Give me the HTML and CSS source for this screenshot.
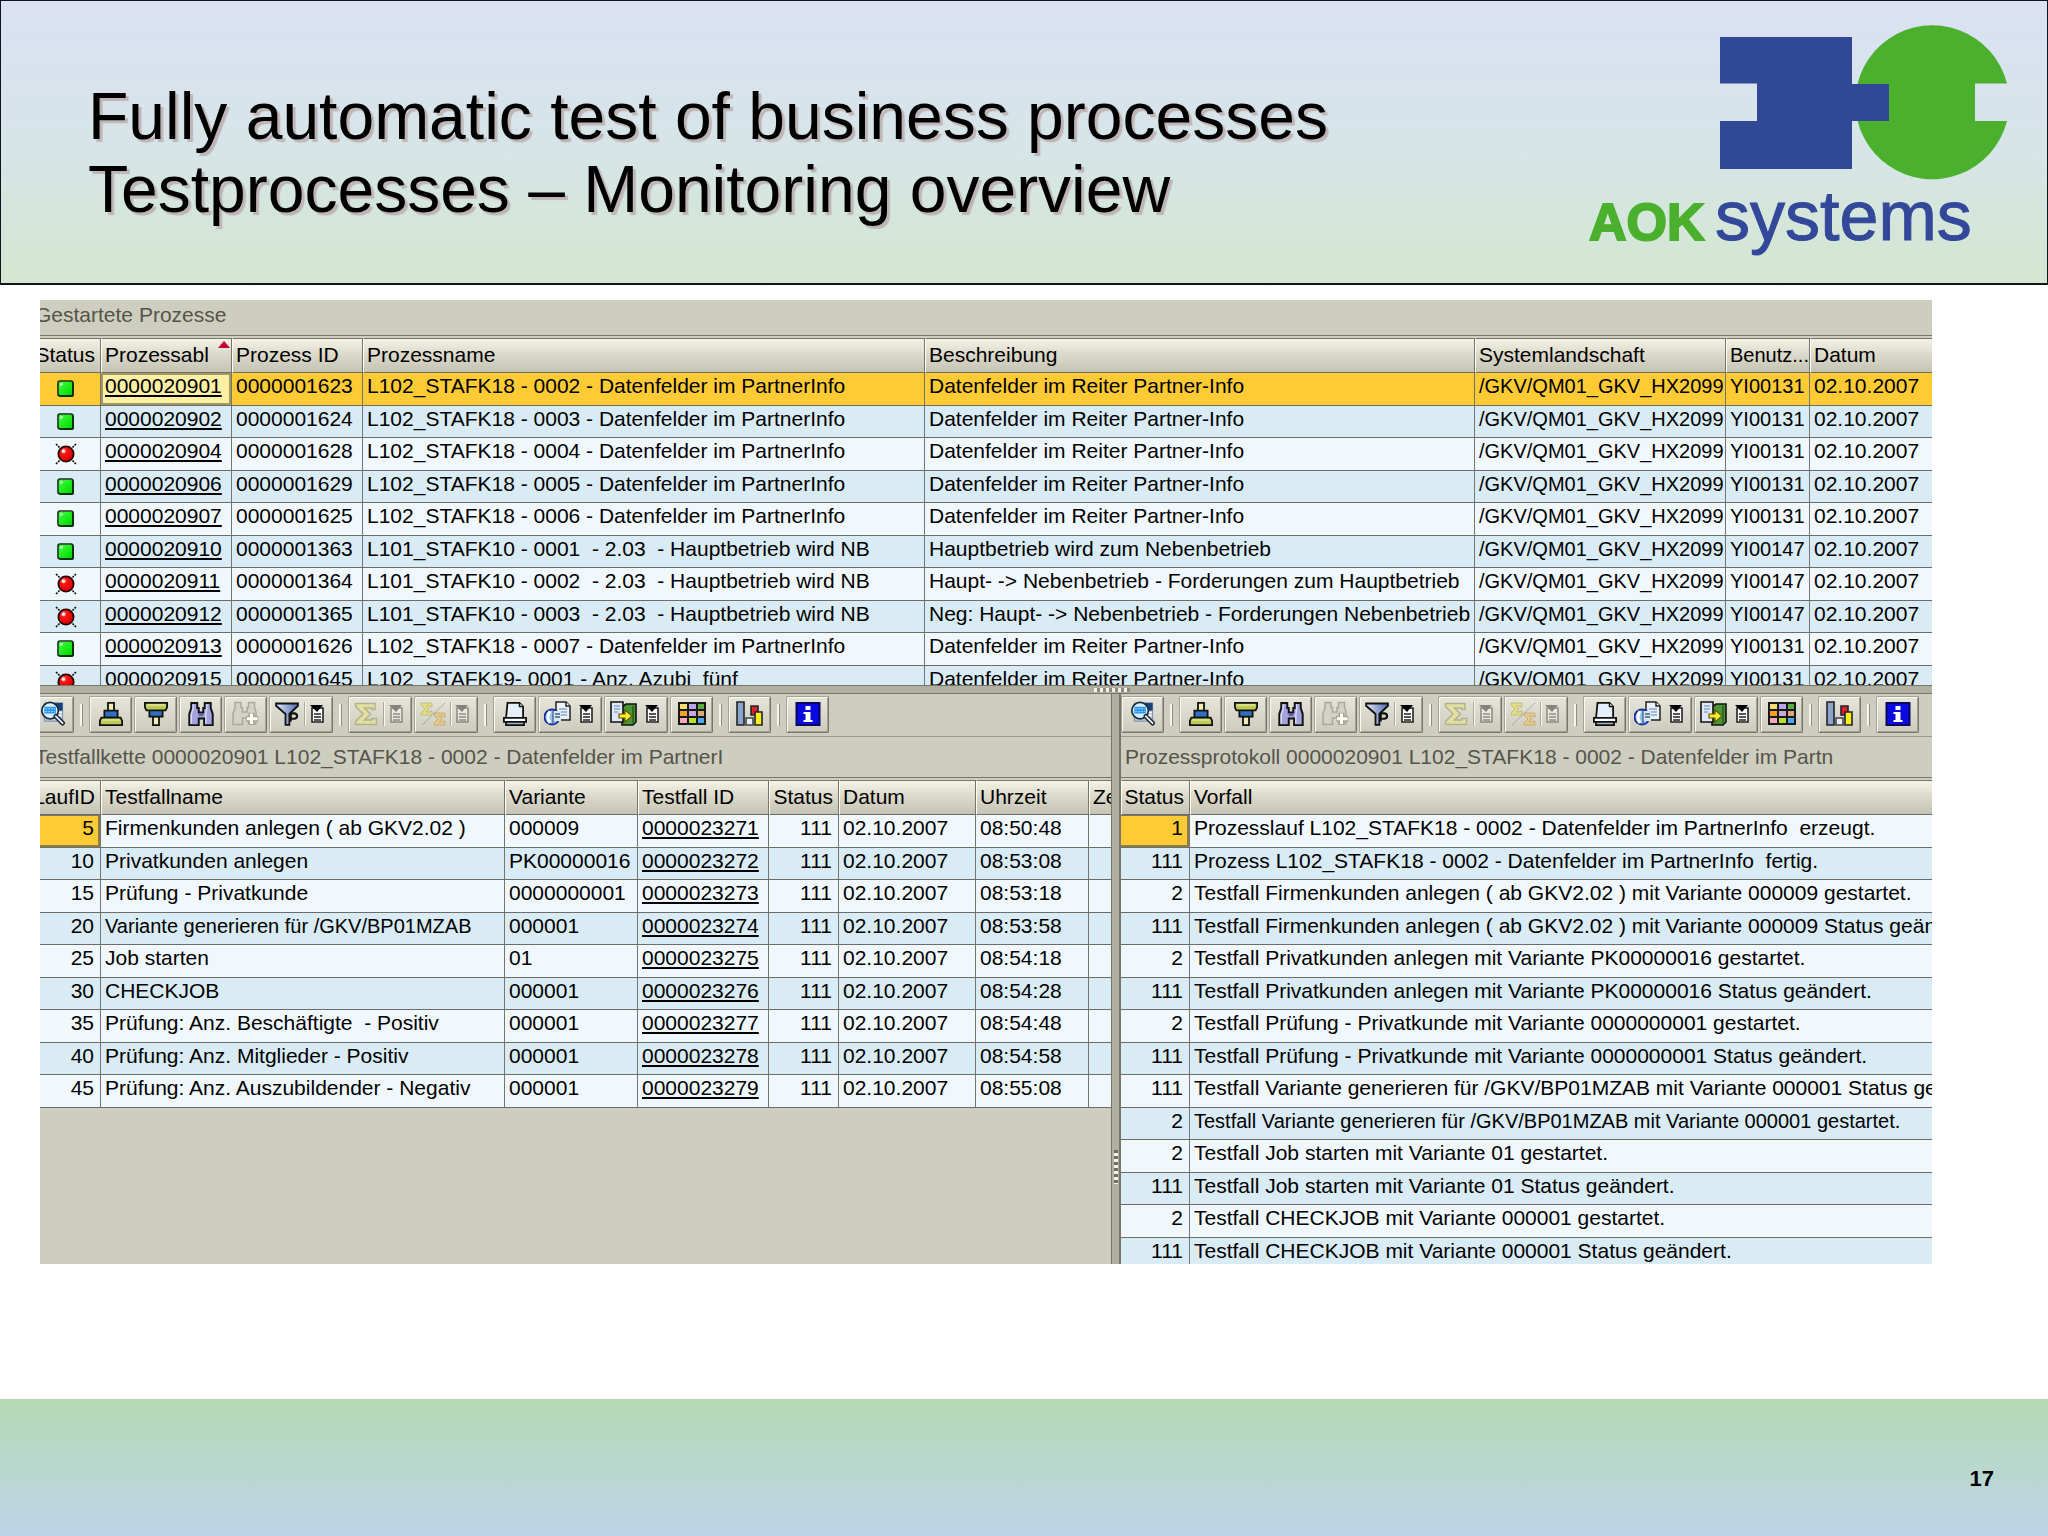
FILE: index.html
```html
<!DOCTYPE html>
<html lang="en">
<head>
<meta charset="utf-8">
<title>Testprocesses – Monitoring overview</title>
<link rel="stylesheet" href="styles.css">
</head>
<body>
<svg class="sprite" aria-hidden="true">
  <defs>
    <linearGradient id="g-funnel" x1="0" x2="1" y1="0" y2="0"><stop offset="0" stop-color="#dfe8fa"/><stop offset="1" stop-color="#4f6db0"/></linearGradient>
    <linearGradient id="g-green" x1="0" x2="1" y1="0" y2="1"><stop offset="0" stop-color="#3cff3c"/><stop offset="1" stop-color="#00d800"/></linearGradient>
    <radialGradient id="g-red" cx=".35" cy=".3" r=".7"><stop offset="0" stop-color="#ffb0b0"/><stop offset=".3" stop-color="#ff1414"/><stop offset="1" stop-color="#d80000"/></radialGradient>
  </defs>
  <symbol id="i-ok" viewBox="0 0 18 18">
    <rect x="2" y="2" width="15" height="15" rx="2" fill="#0b3a0b"/>
    <rect x="2" y="2" width="13" height="13" rx="1" fill="url(#g-green)"/>
    <rect x="1" y="1" width="15" height="15" rx="2" fill="none" stroke="#0a300a" stroke-width="1.6"/>
    <path d="M4 6V4h2" fill="none" stroke="#d8ffd8" stroke-width="1.4"/>
  </symbol>
  <symbol id="i-error" viewBox="0 0 22 22">
    <path d="M1 1l4 4M21 1l-4 4M1 21l4-4M21 21l-4-4" stroke="#111" stroke-width="1.6" stroke-dasharray="2 1"/>
    <circle cx="11" cy="11" r="7.6" fill="url(#g-red)" stroke="#2a0000" stroke-width="1.8"/>
    <circle cx="8.4" cy="8.2" r="1.6" fill="#fff"/>
  </symbol>
  <symbol id="i-find" viewBox="0 0 27 26">
    <path d="M5 2h19v19H5z" fill="#b9c7d8" stroke="#7890ac"/>
    <path d="M16 2h8v8h-8z" fill="#14427c"/>
    <path d="M19 12h4M19 15h4" stroke="#fff" stroke-width="1.5"/>
    <circle cx="11" cy="10" r="8.6" fill="#d6f0ff" stroke="#1c2c3c" stroke-width="1.8"/>
    <path d="M5 6h12v7H5z" fill="#2f97ee"/>
    <path d="M6 8h10M6 11h10" stroke="#8fd0ff" stroke-dasharray="2 1"/>
    <path d="M17 16l7 7" stroke="#1c2430" stroke-width="5" stroke-linecap="round"/>
    <path d="M17 16l7 7" stroke="#e8eef4" stroke-width="2" stroke-linecap="round"/>
  </symbol>
  <symbol id="i-asc" viewBox="0 0 16 16">
    <g stroke="#111" stroke-width="1.2">
      <path d="M6 .6h4v5.400H6z" fill="#f2edb6"/>
      <path d="M3.600 5.800h8.800v4.600H3.600z" fill="#2f6fc0"/>
      <path d="M1.600 10.400h12.800l1 2v3H.6v-3z" fill="#bccb52"/>
    </g>
    <path d="M2.500 12h11" stroke="#dfe79a"/>
  </symbol>
  <symbol id="i-desc" viewBox="0 0 16 16">
    <g stroke="#111" stroke-width="1.2">
      <path d="M6 9.600h4v5.800H6z" fill="#f2edb6"/>
      <path d="M3.600 5.400h8.800v4.400H3.600z" fill="#2f6fc0"/>
      <path d="M.6.600h14.800v3l-1 2H1.600l-1-2z" fill="#bccb52"/>
    </g>
    <path d="M2 2h12" stroke="#dfe79a"/>
  </symbol>
  <symbol id="i-bino" viewBox="0 0 17 16">
    <path d="M2 .6h4v3.400h1v3h3V4h1V.6h4V4l1.300 4v7.400h-5.700V11H7v4.400H.7V8L2 4z" fill="#a3a3dc" stroke="#111" stroke-width="1.300"/>
    <path d="M3.300 1.500v3L2 8.500v6M12.300 1.500v3L11.700 8.500v6" stroke="#d6d6f6" fill="none"/>
    <path d="M7 8.500h3" stroke="#5a5aa8" stroke-width="1.500"/>
  </symbol>
  <symbol id="i-bino-next" viewBox="0 0 18 16">
    <path d="M2 .6h4v3.400h1v3h3V4h1V.6h4V4l1 3v8h-5v-4H7v4.400H.7V8L2 4z" fill="#d3d2c6" stroke="#aaa99d"/>
    <path d="M13 7.500v8M9.500 11.500h8" stroke="#a5a498" stroke-width="4"/>
    <path d="M13 8v7M10 11.500h7" stroke="#fffff2" stroke-width="2"/>
  </symbol>
  <symbol id="i-filter" viewBox="0 0 16 16">
    <path d="M.7 1h14.600v1.500L9.600 8v7.200H7V8L.7 2.500z" fill="url(#g-funnel)" stroke="#111" stroke-width="1.200"/>
    <path d="M10.500 13V7.600h2.200q2 0 2 1.800t-2 1.800h-2" fill="none" stroke="#111" stroke-width="1.400"/>
  </symbol>
  <symbol id="i-menu" viewBox="0 0 14 18">
    <path d="M2 3h11v14H2z" fill="#fff" stroke="#222" stroke-width="1.600"/>
    <path d="M4 9h7M4 12h7M4 15h7" stroke="#222" stroke-width="1.300"/>
    <path d="M0 0h13L7 7z" fill="#000"/>
  </symbol>
  <symbol id="i-sum" viewBox="0 0 16 16">
    <path d="M1 1h13v4h-2V4H7l4 4-4 4h5v-1h3v4H1v-2l5-5-5-5z" fill="#e2dfa2" stroke="#b4b28c"/>
  </symbol>
  <symbol id="i-subtotal" viewBox="0 0 26 24">
    <path d="M1 1h11v4h-2V4H6l3 3-3 3h4V9h2v4H1v-2l4-4-4-4z" fill="#e2df7c" stroke="#c0bd8a"/>
    <path d="M14 11h11v4h-2v-1h-4l3 3-3 3h4v-1h2v4H14v-2l4-4-4-4z" fill="#e8c98c" stroke="#c8ac78"/>
    <path d="M25 1L2 23" stroke="#98978a" stroke-dasharray="2 1"/>
  </symbol>
  <symbol id="i-print" viewBox="0 0 16 16">
    <path d="M3 .6h8l2.400 2.400v8H2z" fill="#e6f0fb" stroke="#111" stroke-width="1.200"/>
    <path d="M11 .6V3h2.400" fill="#fff" stroke="#111"/>
    <path d="M.6 10.600h14.800v2.600H.6z" fill="#fff" stroke="#111" stroke-width="1.200"/>
    <path d="M2 13.200h12v2.200H2z" fill="#9fb2cc" stroke="#111" stroke-width="1.200"/>
  </symbol>
  <symbol id="i-view" viewBox="0 0 27 25">
    <path d="M12 1h10l4 4v14H12z" fill="#e9f2fd" stroke="#222" stroke-width="1.500"/>
    <path d="M22 1v4h4" fill="#fff" stroke="#222" stroke-width="1.500"/>
    <path d="M15 8h8M15 11h8M15 14h8" stroke="#8aa6cc" stroke-width="1.500"/>
    <circle cx="8" cy="16" r="7.500" fill="#8fc4f4" stroke="#1830a0" stroke-width="1.800"/>
    <path d="M6 10q-4 6 0 12" fill="none" stroke="#fff" stroke-width="3"/>
    <path d="M9 10h8v10H9z" fill="#d8e6f6"/>
    <path d="M9 10v12M11 13h5M11 16h5" stroke="#44607c" stroke-width="1.300"/>
  </symbol>
  <symbol id="i-export" viewBox="0 0 27 25">
    <path d="M12 6l4-3h10v18l-3 3H12z" fill="#4a9636" stroke="#111" stroke-width="1.600"/>
    <path d="M23 5v17" stroke="#2c6a1e" stroke-width="2"/>
    <path d="M1 1h12v20H1z" fill="#dfe8f8" stroke="#111" stroke-width="1.600"/>
    <path d="M4 5h6M4 8h6M4 11h4" stroke="#8ba4cc" stroke-width="1.500"/>
    <path d="M9 13h6V9l7 6-7 6v-4H9z" fill="#ffee30" stroke="#665800" stroke-width="1.200"/>
  </symbol>
  <symbol id="i-layout" viewBox="0 0 28 23">
    <path d="M0 0h28v23H0z" fill="#181818"/>
    <path d="M2 2h7v5H2z" fill="#f8e070"/><path d="M11 2h7v5h-7z" fill="#b8a8e8"/><path d="M20 2h6v5h-6z" fill="#58b040"/>
    <path d="M2 9h7v5H2z" fill="#f8a020"/><path d="M11 9h7v5h-7z" fill="#c8a8d8"/><path d="M20 9h6v5h-6z" fill="#d8a878"/>
    <path d="M2 16h7v5H2z" fill="#f8a8b8"/><path d="M11 16h7v5h-7z" fill="#b8e030"/><path d="M20 16h6v5h-6z" fill="#48a8f8"/>
  </symbol>
  <symbol id="i-chart" viewBox="0 0 27 25">
    <path d="M1 1h7v23H1z" fill="#8aa4cc" stroke="#222" stroke-width="1.600"/>
    <path d="M15 5h7v9h-7z" fill="#e02030" stroke="#222" stroke-width="1.600"/>
    <path d="M10 17h7v7h-7z" fill="#e8eefc" stroke="#444" stroke-width="1.600"/>
    <path d="M19 11h7v13h-7z" fill="#f8ee20" stroke="#222" stroke-width="1.600"/>
  </symbol>
  <symbol id="i-info" viewBox="0 0 25 24">
    <path d="M1 1h23v22H1z" fill="#0a0ae0" stroke="#08085c" stroke-width="2"/>
    <path d="M10 4h5v4h-5zM8 10h7v8h2v2H8v-2h2v-6H8z" fill="#fff"/>
  </symbol>
</svg>

<header class="banner">
  <h1 class="banner-title">Fully automatic test of business processes<br>Testprocesses – Monitoring overview</h1>
  <svg class="logo" viewBox="0 0 424 232" role="img" aria-label="AOK systems">
    <path d="M388 59.500h32A77 77 0 1 0 420 97H388z" fill="#4ab02d"/>
    <path d="M133 13h132v47h37v37h-37v48H133V97h37V59.500h-37z" fill="#314896"/>
    <text class="logo-aok" x="2" y="216">AOK</text>
    <text class="logo-systems" x="128" y="216">systems</text>
  </svg>
</header>

<main class="monitor">
  <section class="pane pane-top scrolled">
    <div class="scrolled-body">
      <h2 class="caption caption-short">Gestartete Prozesse</h2>
      <table class="grid">
        <colgroup><col class="w70"><col class="w131"><col class="w131"><col class="w562"><col class="w550"><col class="w251"><col class="w84"><col></colgroup>
        <thead><tr><th class="num">Status</th><th class="sorted">Prozessabl<svg class="sort-mark" viewBox="0 0 12 7"><path d="M0 7h12L6 0z" fill="#c00030"/></svg></th><th>Prozess ID</th><th>Prozessname</th><th>Beschreibung</th><th>Systemlandschaft</th><th class="tight">Benutz...</th><th>Datum</th></tr></thead>
        <tbody>
          <tr class="selected"><td class="state"><svg class="ok"><use href="#i-ok"/></svg></td><td class="focus"><a href="#">0000020901</a></td><td>0000001623</td><td>L102_STAFK18 - 0002 - Datenfelder im PartnerInfo</td><td>Datenfelder im Reiter Partner-Info</td><td class="tight">/GKV/QM01_GKV_HX2099</td><td class="tight">YI00131</td><td>02.10.2007</td></tr>
          <tr><td class="state"><svg class="ok"><use href="#i-ok"/></svg></td><td><a href="#">0000020902</a></td><td>0000001624</td><td>L102_STAFK18 - 0003 - Datenfelder im PartnerInfo</td><td>Datenfelder im Reiter Partner-Info</td><td class="tight">/GKV/QM01_GKV_HX2099</td><td class="tight">YI00131</td><td>02.10.2007</td></tr>
          <tr><td class="state"><svg class="error"><use href="#i-error"/></svg></td><td><a href="#">0000020904</a></td><td>0000001628</td><td>L102_STAFK18 - 0004 - Datenfelder im PartnerInfo</td><td>Datenfelder im Reiter Partner-Info</td><td class="tight">/GKV/QM01_GKV_HX2099</td><td class="tight">YI00131</td><td>02.10.2007</td></tr>
          <tr><td class="state"><svg class="ok"><use href="#i-ok"/></svg></td><td><a href="#">0000020906</a></td><td>0000001629</td><td>L102_STAFK18 - 0005 - Datenfelder im PartnerInfo</td><td>Datenfelder im Reiter Partner-Info</td><td class="tight">/GKV/QM01_GKV_HX2099</td><td class="tight">YI00131</td><td>02.10.2007</td></tr>
          <tr><td class="state"><svg class="ok"><use href="#i-ok"/></svg></td><td><a href="#">0000020907</a></td><td>0000001625</td><td>L102_STAFK18 - 0006 - Datenfelder im PartnerInfo</td><td>Datenfelder im Reiter Partner-Info</td><td class="tight">/GKV/QM01_GKV_HX2099</td><td class="tight">YI00131</td><td>02.10.2007</td></tr>
          <tr><td class="state"><svg class="ok"><use href="#i-ok"/></svg></td><td><a href="#">0000020910</a></td><td>0000001363</td><td>L101_STAFK10 - 0001  - 2.03  - Hauptbetrieb wird NB</td><td>Hauptbetrieb wird zum Nebenbetrieb</td><td class="tight">/GKV/QM01_GKV_HX2099</td><td class="tight">YI00147</td><td>02.10.2007</td></tr>
          <tr><td class="state"><svg class="error"><use href="#i-error"/></svg></td><td><a href="#">0000020911</a></td><td>0000001364</td><td>L101_STAFK10 - 0002  - 2.03  - Hauptbetrieb wird NB</td><td>Haupt- -&gt; Nebenbetrieb - Forderungen zum Hauptbetrieb</td><td class="tight">/GKV/QM01_GKV_HX2099</td><td class="tight">YI00147</td><td>02.10.2007</td></tr>
          <tr><td class="state"><svg class="error"><use href="#i-error"/></svg></td><td><a href="#">0000020912</a></td><td>0000001365</td><td>L101_STAFK10 - 0003  - 2.03  - Hauptbetrieb wird NB</td><td>Neg: Haupt- -&gt; Nebenbetrieb - Forderungen Nebenbetrieb</td><td class="tight">/GKV/QM01_GKV_HX2099</td><td class="tight">YI00147</td><td>02.10.2007</td></tr>
          <tr><td class="state"><svg class="ok"><use href="#i-ok"/></svg></td><td><a href="#">0000020913</a></td><td>0000001626</td><td>L102_STAFK18 - 0007 - Datenfelder im PartnerInfo</td><td>Datenfelder im Reiter Partner-Info</td><td class="tight">/GKV/QM01_GKV_HX2099</td><td class="tight">YI00131</td><td>02.10.2007</td></tr>
          <tr><td class="state"><svg class="error"><use href="#i-error"/></svg></td><td><a href="#">0000020915</a></td><td>0000001645</td><td>L102_STAFK19- 0001 - Anz. Azubi_fünf</td><td>Datenfelder im Reiter Partner-Info</td><td class="tight">/GKV/QM01_GKV_HX2099</td><td class="tight">YI00131</td><td>02.10.2007</td></tr>
        </tbody>
      </table>
    </div>
  </section>

  <div class="splitter-h"><span class="grip-h"></span></div>

  <div class="lower">
    <section class="pane scrolled">
      <div class="scrolled-body">
        <div class="toolbar">
          <button class="tool" aria-label="Details"><svg class="i27"><use href="#i-find"/></svg></button>
          <span class="divider"></span>
          <button class="tool" aria-label="Sort ascending"><svg class="i24"><use href="#i-asc"/></svg></button>
          <button class="tool" aria-label="Sort descending"><svg class="i24"><use href="#i-desc"/></svg></button>
          <button class="tool" aria-label="Find"><svg class="i26"><use href="#i-bino"/></svg></button>
          <button class="tool" aria-label="Find next" disabled><svg class="i27"><use href="#i-bino-next"/></svg></button>
          <button class="tool wide" aria-label="Filter"><svg class="i24"><use href="#i-filter"/></svg><span class="rule"></span><svg class="menu"><use href="#i-menu"/></svg></button>
          <span class="divider"></span>
          <button class="tool wide" aria-label="Total" disabled><svg class="i24"><use href="#i-sum"/></svg><span class="rule"></span><svg class="menu"><use href="#i-menu"/></svg></button>
          <button class="tool wide" aria-label="Subtotals" disabled><svg class="i26"><use href="#i-subtotal"/></svg><span class="rule"></span><svg class="menu"><use href="#i-menu"/></svg></button>
          <span class="divider"></span>
          <button class="tool" aria-label="Print"><svg class="i24"><use href="#i-print"/></svg></button>
          <button class="tool wide" aria-label="Views"><svg class="i27"><use href="#i-view"/></svg><svg class="menu"><use href="#i-menu"/></svg></button>
          <button class="tool wide" aria-label="Export"><svg class="i27"><use href="#i-export"/></svg><svg class="menu"><use href="#i-menu"/></svg></button>
          <button class="tool" aria-label="Layout"><svg class="i28"><use href="#i-layout"/></svg></button>
          <span class="divider"></span>
          <button class="tool" aria-label="Graphic"><svg class="i27"><use href="#i-chart"/></svg></button>
          <span class="divider"></span>
          <button class="tool" aria-label="Information"><svg class="i26"><use href="#i-info"/></svg></button>
        </div>
        <h2 class="caption">Testfallkette 0000020901 L102_STAFK18 - 0002 - Datenfelder im PartnerI</h2>
        <table class="grid">
          <colgroup><col class="w70"><col class="w404"><col class="w133"><col class="w131"><col class="w70"><col class="w137"><col class="w113"><col></colgroup>
          <thead><tr><th class="num">LaufID</th><th>Testfallname</th><th>Variante</th><th>Testfall ID</th><th class="num">Status</th><th>Datum</th><th>Uhrzeit</th><th>Ze</th></tr></thead>
          <tbody>
            <tr><td class="num current">5</td><td>Firmenkunden anlegen ( ab GKV2.02 )</td><td>000009</td><td><a href="#">0000023271</a></td><td class="num">111</td><td>02.10.2007</td><td>08:50:48</td><td></td></tr>
            <tr><td class="num">10</td><td>Privatkunden anlegen</td><td>PK00000016</td><td><a href="#">0000023272</a></td><td class="num">111</td><td>02.10.2007</td><td>08:53:08</td><td></td></tr>
            <tr><td class="num">15</td><td>Prüfung - Privatkunde</td><td>0000000001</td><td><a href="#">0000023273</a></td><td class="num">111</td><td>02.10.2007</td><td>08:53:18</td><td></td></tr>
            <tr><td class="num">20</td><td class="tight">Variante generieren für /GKV/BP01MZAB</td><td>000001</td><td><a href="#">0000023274</a></td><td class="num">111</td><td>02.10.2007</td><td>08:53:58</td><td></td></tr>
            <tr><td class="num">25</td><td>Job starten</td><td>01</td><td><a href="#">0000023275</a></td><td class="num">111</td><td>02.10.2007</td><td>08:54:18</td><td></td></tr>
            <tr><td class="num">30</td><td>CHECKJOB</td><td>000001</td><td><a href="#">0000023276</a></td><td class="num">111</td><td>02.10.2007</td><td>08:54:28</td><td></td></tr>
            <tr><td class="num">35</td><td>Prüfung: Anz. Beschäftigte  - Positiv</td><td>000001</td><td><a href="#">0000023277</a></td><td class="num">111</td><td>02.10.2007</td><td>08:54:48</td><td></td></tr>
            <tr><td class="num">40</td><td>Prüfung: Anz. Mitglieder - Positiv</td><td>000001</td><td><a href="#">0000023278</a></td><td class="num">111</td><td>02.10.2007</td><td>08:54:58</td><td></td></tr>
            <tr><td class="num">45</td><td>Prüfung: Anz. Auszubildender - Negativ</td><td>000001</td><td><a href="#">0000023279</a></td><td class="num">111</td><td>02.10.2007</td><td>08:55:08</td><td></td></tr>
          </tbody>
        </table>
      </div>
    </section>

    <div class="splitter-v"><span class="grip-v"></span></div>

    <section class="pane">
      <div class="toolbar">
        <button class="tool" aria-label="Details"><svg class="i27"><use href="#i-find"/></svg></button>
        <span class="divider"></span>
        <button class="tool" aria-label="Sort ascending"><svg class="i24"><use href="#i-asc"/></svg></button>
        <button class="tool" aria-label="Sort descending"><svg class="i24"><use href="#i-desc"/></svg></button>
        <button class="tool" aria-label="Find"><svg class="i26"><use href="#i-bino"/></svg></button>
        <button class="tool" aria-label="Find next" disabled><svg class="i27"><use href="#i-bino-next"/></svg></button>
        <button class="tool wide" aria-label="Filter"><svg class="i24"><use href="#i-filter"/></svg><span class="rule"></span><svg class="menu"><use href="#i-menu"/></svg></button>
        <span class="divider"></span>
        <button class="tool wide" aria-label="Total" disabled><svg class="i24"><use href="#i-sum"/></svg><span class="rule"></span><svg class="menu"><use href="#i-menu"/></svg></button>
        <button class="tool wide" aria-label="Subtotals" disabled><svg class="i26"><use href="#i-subtotal"/></svg><span class="rule"></span><svg class="menu"><use href="#i-menu"/></svg></button>
        <span class="divider"></span>
        <button class="tool" aria-label="Print"><svg class="i24"><use href="#i-print"/></svg></button>
        <button class="tool wide" aria-label="Views"><svg class="i27"><use href="#i-view"/></svg><svg class="menu"><use href="#i-menu"/></svg></button>
        <button class="tool wide" aria-label="Export"><svg class="i27"><use href="#i-export"/></svg><svg class="menu"><use href="#i-menu"/></svg></button>
        <button class="tool" aria-label="Layout"><svg class="i28"><use href="#i-layout"/></svg></button>
        <span class="divider"></span>
        <button class="tool" aria-label="Graphic"><svg class="i27"><use href="#i-chart"/></svg></button>
        <span class="divider"></span>
        <button class="tool" aria-label="Information"><svg class="i26"><use href="#i-info"/></svg></button>
      </div>
      <h2 class="caption">Prozessprotokoll 0000020901 L102_STAFK18 - 0002 - Datenfelder im Partn</h2>
      <table class="grid">
        <colgroup><col class="w69"><col></colgroup>
        <thead><tr><th class="num">Status</th><th>Vorfall</th></tr></thead>
        <tbody>
          <tr><td class="num current">1</td><td>Prozesslauf L102_STAFK18 - 0002 - Datenfelder im PartnerInfo  erzeugt.</td></tr>
          <tr><td class="num">111</td><td>Prozess L102_STAFK18 - 0002 - Datenfelder im PartnerInfo  fertig.</td></tr>
          <tr><td class="num">2</td><td>Testfall Firmenkunden anlegen ( ab GKV2.02 ) mit Variante 000009 gestartet.</td></tr>
          <tr><td class="num">111</td><td>Testfall Firmenkunden anlegen ( ab GKV2.02 ) mit Variante 000009 Status geändert.</td></tr>
          <tr><td class="num">2</td><td>Testfall Privatkunden anlegen mit Variante PK00000016 gestartet.</td></tr>
          <tr><td class="num">111</td><td>Testfall Privatkunden anlegen mit Variante PK00000016 Status geändert.</td></tr>
          <tr><td class="num">2</td><td>Testfall Prüfung - Privatkunde mit Variante 0000000001 gestartet.</td></tr>
          <tr><td class="num">111</td><td>Testfall Prüfung - Privatkunde mit Variante 0000000001 Status geändert.</td></tr>
          <tr><td class="num">111</td><td>Testfall Variante generieren für /GKV/BP01MZAB mit Variante 000001 Status geändert.</td></tr>
          <tr><td class="num">2</td><td class="tight">Testfall Variante generieren für /GKV/BP01MZAB mit Variante 000001 gestartet.</td></tr>
          <tr><td class="num">2</td><td>Testfall Job starten mit Variante 01 gestartet.</td></tr>
          <tr><td class="num">111</td><td>Testfall Job starten mit Variante 01 Status geändert.</td></tr>
          <tr><td class="num">2</td><td>Testfall CHECKJOB mit Variante 000001 gestartet.</td></tr>
          <tr><td class="num">111</td><td>Testfall CHECKJOB mit Variante 000001 Status geändert.</td></tr>
        </tbody>
      </table>
    </section>
  </div>
</main>

<footer class="footer"><span class="page-number">17</span></footer>
</body>
</html>
```
FILE: styles.css
```css
* { box-sizing: border-box; }

body {
  margin: 0;
  min-height: 100vh;
  display: flex;
  flex-direction: column;
  background: #fff;
  color: #000;
  font-family: "Liberation Sans", Arial, sans-serif;
  font-size: 21px;
}

.sprite { position: absolute; width: 0; height: 0; }

/* Banner */
.banner {
  display: flex;
  justify-content: space-between;
  align-items: flex-start;
  min-height: 285px;
  padding: 23px 36px 26px 87px;
  border: 1px solid #10141c;
  border-bottom-width: 2px;
  background: linear-gradient(#dbe1f4, #d6e5e6 55%, #d3e7d0);
}
.banner-title {
  margin: 56px 0 0;
  font-size: 66px;
  line-height: 73px;
  font-weight: 400;
  text-shadow: 3px 3px 1px #bfb5b6;
}
.logo { flex: none; width: 424px; height: 232px; }
.logo-aok { font-size: 52px; font-weight: 700; fill: #4ab02d; stroke: #4ab02d; stroke-width: 2px; }
.logo-systems { font-size: 70px; fill: #34489a; stroke: #34489a; stroke-width: 1px; }

/* Monitor window */
.monitor {
  margin: 15px 116px 0 40px;
  background: #cfcdc0;
}
.pane { min-width: 0; overflow: hidden; background: #cecec0; }
.pane-top { height: 385px; }
.scrolled-body { margin-left: -9px; }

.lower {
  display: grid;
  grid-template-columns: minmax(0, 1071fr) 10px minmax(0, 811fr);
  height: 570px;
}

.splitter-h, .splitter-v {
  display: flex;
  align-items: center;
  justify-content: center;
  background: #b0afa2;
}
.splitter-h {
  height: 9px;
  padding-left: 252px;
  border-top: 1px solid #77766b;
  border-bottom: 1px solid #77766b;
}
.splitter-v {
  align-items: flex-end;
  padding-bottom: 80px;
  border-left: 1px solid #77766b;
  border-right: 2px solid #77766b;
}
.grip-h { width: 36px; height: 4px; background: repeating-linear-gradient(90deg, #f4f3ea 0 3px, #8b8a7e 3px 6px); }
.grip-v { width: 4px; height: 34px; background: repeating-linear-gradient(#6f6e62 0 3px, #f4f3ea 3px 6px); }

/* Captions */
.caption {
  margin: 0 0 2px;
  height: 42px;
  padding: 0 4px;
  border-top: 1px solid #9b9a8e;
  border-bottom: 1px solid #77766b;
  font-size: 21px;
  font-weight: 400;
  line-height: 40px;
  white-space: pre;
  color: #55544a;
}
.caption-short {
  height: 36px;
  border-top: 0;
  line-height: 30px;
}

/* Grids */
.grid {
  width: 100%;
  table-layout: fixed;
  border-collapse: separate;
  border-spacing: 0;
}
.w69 { width: 69px; }
.w70 { width: 70px; }
.w84 { width: 84px; }
.w113 { width: 113px; }
.w131 { width: 131px; }
.w133 { width: 133px; }
.w137 { width: 137px; }
.w251 { width: 251px; }
.w404 { width: 404px; }
.w550 { width: 550px; }
.w562 { width: 562px; }

th, td {
  overflow: hidden;
  white-space: pre;
  text-align: left;
  font-weight: 400;
  border-right: 1px solid #74756e;
  border-bottom: 1px solid #6c6d66;
}
th {
  position: relative;
  height: 35px;
  padding: 0 0 2px 3px;
  line-height: 30px;
  border-top: 1px solid #77766b;
  border-left: 1px solid #fffff4;
  background: linear-gradient(#f4f3e6, #dcdacb 45%, #c4c3b4);
}
td {
  height: 33px;
  padding: 0 0 6px 4px;
  line-height: 26px;
  background: #f1f8fd;
}
tr:nth-child(even) td { height: 32px; padding-bottom: 5px; background: #d9ebf4; }
tr > :last-child { border-right: 0; }
th.num { padding: 0 5px 2px 0; text-align: right; }
td.num { padding-right: 6px; text-align: right; }
.tight { font-size: 20px; }

.selected td { background: #ffcb34; }
.selected td.focus { background: #fdf0a4; box-shadow: inset 0 0 0 2px #a39a62; }
td.current { background: #ffcb34; box-shadow: inset 0 1px #77766b, inset -2px -2px #8c7e48; }

tbody tr:nth-child(n) td.state { padding: 0; text-align: center; vertical-align: middle; }
.ok, .error { display: block; margin: 0 auto; }
.ok { width: 18px; height: 18px; }
.error { width: 22px; height: 22px; }

.sort-mark { position: absolute; top: 2px; right: 1px; width: 12px; height: 7px; }

.grid a {
  color: inherit;
  text-decoration: underline;
  text-decoration-thickness: 2px;
  text-underline-offset: 2px;
  text-decoration-skip-ink: none;
}

/* Toolbars */
.toolbar {
  display: flex;
  align-items: center;
  gap: 2px;
  height: 42px;
  padding-bottom: 1px;
}
.tool {
  flex: none;
  display: flex;
  align-items: center;
  justify-content: center;
  width: 43px;
  height: 37px;
  padding: 0 0 2px;
  border: 1px solid;
  border-color: #a3a296 #77766b #77766b #a3a296;
  border-radius: 2px;
  background: linear-gradient(#e6e5da, #cccbbd);
  box-shadow: inset 1px 1px #fbfaf0, inset -1px -1px #a3a296;
}
.tool.wide { width: 64px; justify-content: space-between; padding: 0 8px 2px 5px; }
.tool:disabled .menu { opacity: .4; }
.rule { width: 2px; height: 24px; border-left: 1px solid #a8a79b; border-right: 1px solid #fbfaf0; }
.divider { flex: none; width: 3px; height: 22px; margin: 0 4px; border-left: 2px solid #f6f5ec; border-right: 1px solid #8f8e82; }
.i24 { width: 24px; height: 24px; }
.i26 { width: 26px; height: 24px; }
.i27 { width: 27px; height: 25px; }
.i28 { width: 28px; height: 23px; }
.menu { width: 14px; height: 18px; }

/* Footer */
.footer {
  display: flex;
  justify-content: flex-end;
  align-items: center;
  height: 137px;
  margin-top: auto;
  padding: 22px 54px 0 0;
  background: linear-gradient(#b4dab2, #b8d8cc 45%, #bed3e8);
}
.page-number { font-size: 22px; font-weight: 700; }
```
